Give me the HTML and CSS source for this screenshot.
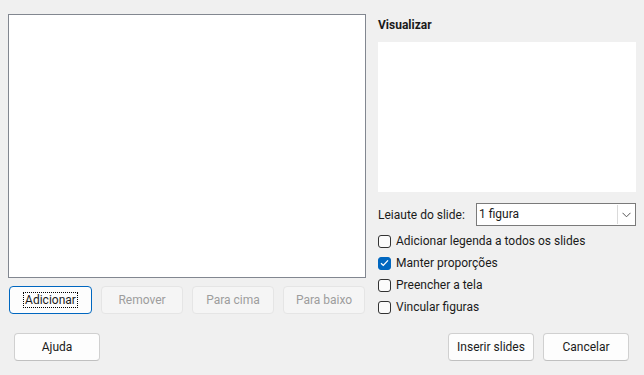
FILE: index.html
```html
<!DOCTYPE html>
<html lang="pt">
<head>
    <meta charset="UTF-8">
    <title>Álbum de fotografias</title>
    <link rel="stylesheet" href="styles.css">
</head>
<body>
    <div class="dialog">
        <div class="main">
            <!-- Left: picture list and its buttons -->
            <div class="left">
                <div class="picture-list"></div>
                <div class="list-buttons">
                    <button class="btn default"><span class="focus">Adicionar</span></button>
                    <button class="btn" disabled>Remover</button>
                    <button class="btn" disabled>Para cima</button>
                    <button class="btn" disabled>Para baixo</button>
                </div>
            </div>

            <!-- Right: preview and options -->
            <div class="right">
                <h2 class="section-title">Visualizar</h2>
                <div class="preview"></div>
                <div class="layout-row">
                    <label class="layout-label">Leiaute do slide:</label>
                    <div class="combo">
                        <span class="combo-value">1 figura</span>
                        <span class="combo-arrow">
                            <svg width="9" height="6" viewBox="0 0 9 6"><path d="M0.5 0.8 L4.5 4.8 L8.5 0.8" fill="none" stroke="#555" stroke-width="1"/></svg>
                        </span>
                    </div>
                </div>
                <div class="options">
                    <label class="check"><span class="box"></span>Adicionar legenda a todos os slides</label>
                    <label class="check"><span class="box checked">
                        <svg width="9" height="8" viewBox="0 0 9 8"><path d="M1 4.2 L3.3 6.4 L8 1.4" fill="none" stroke="#fff" stroke-width="1.3"/></svg>
                    </span>Manter proporções</label>
                    <label class="check"><span class="box"></span>Preencher a tela</label>
                    <label class="check"><span class="box"></span>Vincular figuras</label>
                </div>
            </div>
        </div>

        <div class="footer">
            <button class="btn wide">Ajuda</button>
            <div class="footer-right">
                <button class="btn wide">Inserir slides</button>
                <button class="btn wide">Cancelar</button>
            </div>
        </div>
    </div>
</body>
</html>
```

FILE: styles.css
```css
/* Dialog base */
body {
    margin: 0;
    background-color: #f0f0f0;
    font-family: Roboto, "Noto Sans", sans-serif;
    font-size: 12px;
    color: #1a1a1a;
}
.dialog {
    height: 375px;
    box-sizing: border-box;
    padding: 14px 0 14px 0;
    display: flex;
    flex-direction: column;
}
.main {
    display: flex;
    gap: 12px;
    padding-left: 8px;
}

/* Left column */
.left {
    width: 358px;
}
.picture-list {
    height: 262px;
    background-color: #fff;
    border: 1px solid #828790;
}
.list-buttons {
    display: flex;
    gap: 9px;
    margin-top: 8px;
    padding-left: 1px;
}

/* Buttons */
.btn {
    width: 82px;
    height: 28px;
    padding: 0;
    font-family: inherit;
    font-size: 12px;
    color: #1a1a1a;
    background-color: #fdfdfd;
    border: 1px solid #d0d0d0;
    border-bottom-color: #c0c0c0;
    border-radius: 4px;
}
.btn:disabled {
    color: #9d9d9d;
    background-color: #f5f5f5;
    border-color: #e5e5e5;
}
.btn.default {
    width: 83px;
    border: 1px solid #0067c0;
}
.focus {
    outline: 1px dotted #000;
    padding: 0 1px;
}
.btn.wide {
    width: 86px;
}

/* Right column */
.right {
    width: 258px;
}
.section-title {
    margin: 0 0 9px;
    padding-top: 3px;
    font-size: 12px;
    line-height: 16px;
    font-weight: bold;
}
.preview {
    height: 150px;
    background-color: #fff;
}
.layout-row {
    display: flex;
    align-items: center;
    margin-top: 11px;
}
.layout-label {
    width: 98px;
}
.combo {
    flex: 1;
    height: 23px;
    box-sizing: border-box;
    display: flex;
    align-items: stretch;
    background-color: #fff;
    border: 1px solid #7a7a7a;
}
.combo-value {
    flex: 1;
    padding-left: 2px;
    line-height: 21px;
}
.combo-arrow {
    width: 16px;
    margin: 1px;
    display: flex;
    align-items: center;
    justify-content: center;
    border-left: 1px solid #dadada;
}

/* Checkbox options */
.options {
    margin-top: 4px;
}
.check {
    display: flex;
    align-items: center;
    height: 22px;
}
.box {
    width: 13px;
    height: 13px;
    box-sizing: border-box;
    border: 1px solid #333;
    border-radius: 3px;
    margin-right: 5px;
    display: flex;
    align-items: center;
    justify-content: center;
    background-color: #fbfbfb;
}
.box.checked {
    background-color: #0067c0;
    border-color: #0067c0;
}

/* Footer buttons */
.footer {
    margin-top: auto;
    display: flex;
    justify-content: space-between;
    padding: 0 15px 0 14px;
}
.footer-right {
    display: flex;
    gap: 9px;
}
```
